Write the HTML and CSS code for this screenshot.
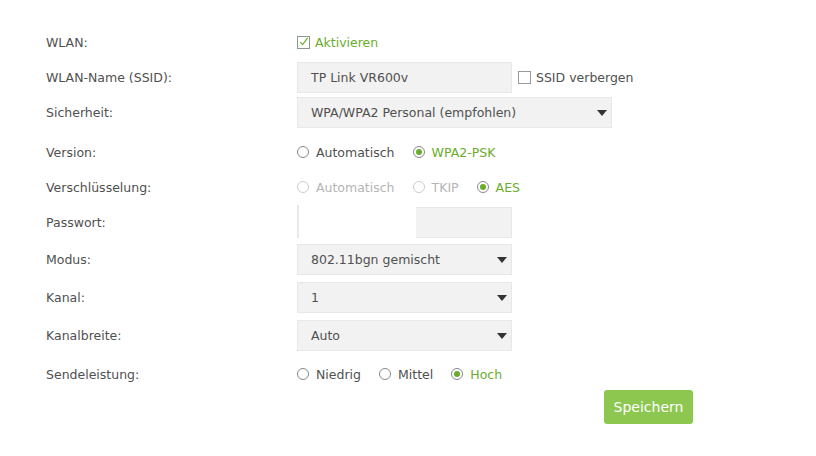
FILE: index.html
```html
<!DOCTYPE html>
<html lang="de">
<head>
<meta charset="utf-8">
<title>WLAN</title>
<link rel="stylesheet" href="styles.css">
</head>
<body>
<form class="form">
  <div class="row r1">
    <div class="label">WLAN:</div>
    <div class="ctrl">
      <label class="check on"><span class="box"><svg viewBox="0 0 12 12" width="12" height="12"><path d="M2.5 6.2 L5 8.8 L10.5 1.5" fill="none" stroke="#6aad2b" stroke-width="1.3"/></svg></span>Aktivieren</label>
    </div>
  </div>
  <div class="row">
    <div class="label">WLAN-Name (SSID):</div>
    <div class="ctrl">
      <div class="field w214">TP Link VR600v</div>
      <label class="check ssid"><span class="box"></span>SSID verbergen</label>
    </div>
  </div>
  <div class="row">
    <div class="label">Sicherheit:</div>
    <div class="ctrl">
      <div class="field select w314">WPA/WPA2 Personal (empfohlen)<span class="arrow"></span></div>
    </div>
  </div>
  <div class="row r4">
    <div class="label">Version:</div>
    <div class="ctrl">
      <span class="radio"><span class="dot"></span>Automatisch</span>
      <span class="radio on"><span class="dot"></span>WPA2-PSK</span>
    </div>
  </div>
  <div class="row">
    <div class="label">Verschlüsselung:</div>
    <div class="ctrl">
      <span class="radio off"><span class="dot"></span>Automatisch</span>
      <span class="radio off"><span class="dot"></span>TKIP</span>
      <span class="radio on"><span class="dot"></span>AES</span>
    </div>
  </div>
  <div class="row">
    <div class="label">Passwort:</div>
    <div class="ctrl">
      <div class="field w214 pass"><span class="pass-in"></span></div>
    </div>
  </div>
  <div class="row r7">
    <div class="label">Modus:</div>
    <div class="ctrl">
      <div class="field select w214">802.11bgn gemischt<span class="arrow"></span></div>
    </div>
  </div>
  <div class="row r8">
    <div class="label">Kanal:</div>
    <div class="ctrl">
      <div class="field select w214">1<span class="arrow"></span></div>
    </div>
  </div>
  <div class="row r8">
    <div class="label">Kanalbreite:</div>
    <div class="ctrl">
      <div class="field select w214">Auto<span class="arrow"></span></div>
    </div>
  </div>
  <div class="row r10">
    <div class="label">Sendeleistung:</div>
    <div class="ctrl">
      <span class="radio"><span class="dot"></span>Niedrig</span>
      <span class="radio"><span class="dot"></span>Mittel</span>
      <span class="radio on"><span class="dot"></span>Hoch</span>
    </div>
  </div>
  <div class="actions">
    <button type="button" class="btn">Speichern</button>
  </div>
</form>
</body>
</html>
```

FILE: styles.css
```css
html, body {
  margin: 0;
  padding: 0;
  background: #fff;
}
body {
  font-family: "DejaVu Sans", Verdana, sans-serif;
  font-size: 12.5px;
  color: #505050;
}
.form {
  width: 647px;
  padding: 27px 0 0 46px;
  display: flex;
  flex-direction: column;
}
.row {
  display: flex;
  align-items: center;
  height: 30px;
  margin-top: 5px;
}
.row.r1 { margin-top: 0; }
.row.r4 { margin-top: 10px; }
.row.r7 { margin-top: 7px; }
.row.r8 { margin-top: 8px; }
.row.r10 { margin-top: 9px; }
.label {
  width: 251px;
  flex: none;
}
.ctrl {
  display: flex;
  align-items: center;
  height: 100%;
}
.field {
  box-sizing: border-box;
  height: 31px;
  background: #f2f2f2;
  border: 1px solid #e8e8e8;
  display: flex;
  align-items: center;
  padding-left: 13px;
  position: relative;
  color: #505050;
}
.w214 { width: 215px; }
.w314 { width: 315px; }
.arrow {
  position: absolute;
  right: 4px;
  top: 12px;
  width: 0;
  height: 0;
  border-left: 5px solid transparent;
  border-right: 5px solid transparent;
  border-top: 6px solid #333;
}
.field.pass {
  padding-left: 0;
  align-items: stretch;
}
.pass-in {
  width: 117px;
  margin: -3px 0 -1px -1px;
  background: #fff;
  border-left: 2px solid #e8e8e8;
}
.check {
  display: flex;
  align-items: center;
}
.check .box {
  box-sizing: border-box;
  width: 13px;
  height: 13px;
  border: 1px solid #999;
  margin-right: 5px;
  display: flex;
  align-items: center;
  justify-content: center;
  background: #fff;
}
.check.on { color: #6aad2b; }
.check.on .box { border-color: #8a9a8a; }
.check.on .box svg { display: block; }
.check.ssid { margin-left: 6px; color: #505050; }
.radio {
  display: flex;
  align-items: center;
  margin-right: 18px;
  color: #505050;
}
.radio .dot {
  box-sizing: border-box;
  width: 12px;
  height: 12px;
  border: 1px solid #888;
  border-radius: 50%;
  margin-right: 7px;
  display: flex;
  align-items: center;
  justify-content: center;
  background: #fff;
}
.radio.on { color: #6aad2b; }
.radio.on .dot::after {
  content: "";
  width: 6px;
  height: 6px;
  border-radius: 50%;
  background: #6aad2b;
}
.radio.off { color: #b5b5b5; }
.radio.off .dot { border-color: #ccc; }
.actions {
  display: flex;
  justify-content: flex-end;
  margin-top: 1px;
}
.btn {
  width: 89px;
  height: 34px;
  background: #8dc750;
  color: #fff;
  border: none;
  border-radius: 3px;
  font-family: "DejaVu Sans", Verdana, sans-serif;
  font-size: 14px;
  padding: 0;
}
```
